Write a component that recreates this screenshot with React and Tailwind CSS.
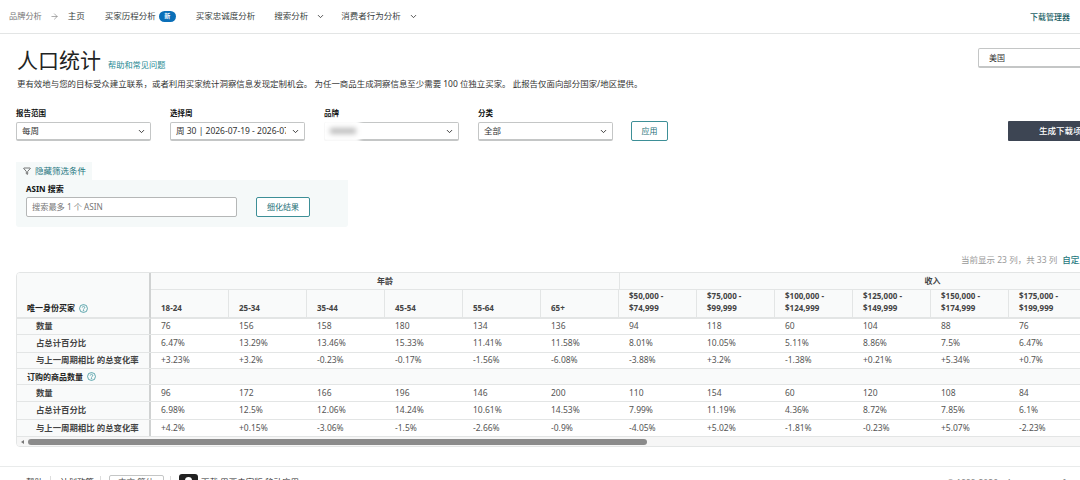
import { ChevronDown, ArrowRight, Filter } from 'lucide-react';

const font = "font-['Noto_Sans','Noto_Sans_CJK_SC',sans-serif]";

const ageCols = ['18-24', '25-34', '35-44', '45-54', '55-64', '65+'];
const incomeCols = [
  ['$50,000 -', '$74,999'],
  ['$75,000 -', '$99,999'],
  ['$100,000 -', '$124,999'],
  ['$125,000 -', '$149,999'],
  ['$150,000 -', '$174,999'],
  ['$175,000 -', '$199,999'],
];

const rows = [
  { label: '数量', h: 'h-[16px]', cells: ['76', '156', '158', '180', '134', '136', '94', '118', '60', '104', '88', '76'] },
  { label: '占总计百分比', h: 'h-[18px]', cells: ['6.47%', '13.29%', '13.46%', '15.33%', '11.41%', '11.58%', '8.01%', '10.05%', '5.11%', '8.86%', '7.5%', '6.47%'] },
  { label: '与上一周期相比 的总变化率', h: 'h-[16px]', cells: ['+3.23%', '+3.2%', '-0.23%', '-0.17%', '-1.56%', '-6.08%', '-3.88%', '+3.2%', '-1.38%', '+0.21%', '+5.34%', '+0.7%'] },
  { section: '订购的商品数量' },
  { label: '数量', h: 'h-[17px]', cells: ['96', '172', '166', '196', '146', '200', '110', '154', '60', '120', '108', '84'] },
  { label: '占总计百分比', h: 'h-[18px]', cells: ['6.98%', '12.5%', '12.06%', '14.24%', '10.61%', '14.53%', '7.99%', '11.19%', '4.36%', '8.72%', '7.85%', '6.1%'] },
  { label: '与上一周期相比 的总变化率', h: 'h-[17px]', cells: ['+4.2%', '+0.15%', '-3.06%', '-1.5%', '-2.66%', '-0.9%', '-4.05%', '+5.02%', '-1.81%', '-0.23%', '+5.07%', '-2.23%'] },
];

const HelpIcon = () => (
  <svg viewBox="0 0 16 16" className="w-[9px] h-[9px] text-[#2a8a94] shrink-0" fill="none" stroke="currentColor" strokeWidth="1.3">
    <circle cx="8" cy="8" r="7" />
    <path d="M5.8 6.2a2.2 2.2 0 1 1 3.4 1.9c-.8.5-1.2.9-1.2 1.7" />
    <circle cx="8" cy="12" r=".5" />
  </svg>
);

const Select = ({ label, value, blurred }) => (
  <div className="relative w-[135px] flex flex-col">
    <div className="h-[13px] text-[7.5px] leading-[13px] font-bold text-[#0f1111]">{label}</div>
    <div className="relative mt-[2px] h-[19px] bg-white border border-[#c4c6c6] border-b-2 rounded-[2px] flex items-center px-[5px] text-[8.5px] text-[#333] overflow-hidden">
      {!blurred && <span className="whitespace-nowrap">{value}</span>}
      <div className="absolute right-0 inset-y-0 w-[18px] bg-white flex items-center justify-center">
        <ChevronDown className="w-[9px] h-[9px] text-[#333]" strokeWidth={2.5} />
      </div>
    </div>
    {/* blurred brand name */}
    {blurred && (
      <div className="absolute left-[-2px] top-[12px] w-[38px] h-[24px] bg-white blur-[2px] flex items-center pl-[8px]">
        <div className="w-[26px] h-[6px] bg-[#bdbdbd] blur-[1.5px]" />
      </div>
    )}
  </div>
);

const NavItem = ({ children, chevron, className }) => (
  <div className={`flex items-center text-[8.5px] text-[#3a3f3f] whitespace-nowrap ${className}`}>
    {children}
    {chevron && <ChevronDown className="w-[9px] h-[9px] ml-[8px] text-[#333]" strokeWidth={2.2} />}
  </div>
);

const HeaderCell = ({ children }) => (
  <div className="w-[78px] shrink-0 h-full border-r border-[#e3e5e5] bg-[#f9fafa] pl-[10px] pb-[3px] flex flex-col justify-end text-[8px] leading-[12px] font-bold text-[#444] whitespace-nowrap">
    {children}
  </div>
);

export default function App() {
  return (
    <div className={`w-[1080px] h-[480px] overflow-hidden bg-white flex flex-col ${font}`}>
      {/* top nav */}
      <div className="h-[34px] shrink-0 border-b border-[#e3e5e5] flex items-center pl-[9px]">
        <span className="text-[8.2px] text-[#777]">品牌分析</span>
        <ArrowRight className="w-[9px] h-[9px] ml-[8px] text-[#777]" strokeWidth={1.6} />
        <NavItem className="ml-[9px]">主页</NavItem>
        <NavItem className="ml-[20px]">
          买家历程分析
          <span className="ml-[3px] w-[17px] h-[11px] rounded-full bg-[#0b6fb8] text-white text-[6px] font-bold flex items-center justify-center">新</span>
        </NavItem>
        <NavItem className="ml-[20px]">买家忠诚度分析</NavItem>
        <NavItem className="ml-[19px]" chevron>搜索分析</NavItem>
        <NavItem className="ml-[16px]" chevron>消费者行为分析</NavItem>
        <span className="ml-auto mr-[10px] text-[8px] font-medium text-[#1d5f66]">下载管理器</span>
      </div>

      {/* title */}
      <div className="relative h-[57px] shrink-0 pl-[17px]">
        <div className="flex items-end h-[41px]">
          <h1 className="text-[21px] leading-[30px] font-normal text-[#1f2424]">人口统计</h1>
          <span className="ml-[7px] mb-[5px] text-[8.2px] leading-[11px] text-[#1f8a94]">帮助和常见问题</span>
        </div>
        <p className="mt-[3px] text-[8.45px] leading-[11px] text-[#333] whitespace-nowrap">
          更有效地与您的目标受众建立联系，或者利用买家统计洞察信息发现定制机会。 为任一商品生成洞察信息至少需要 100 位独立买家。 此报告仅面向部分国家/地区提供。
        </p>
        <div className="absolute left-[978px] top-[14px] w-[120px] h-[20px] bg-white border border-[#c4c6c6] border-b-2 rounded-[2px] flex items-center pl-[10px] text-[8px] text-[#333]">美国</div>
      </div>

      {/* filters */}
      <div className="flex items-start pl-[16px] mt-[16px] shrink-0 h-[33px]">
        <div className="flex gap-[19px]">
          <Select label="报告范围" value="每周" />
          <Select label="选择周" value="周 30 | 2026-07-19 - 2026-07-25" />
          <Select label="品牌" blurred />
          <Select label="分类" value="全部" />
        </div>
        <button className="ml-[18px] mt-[14px] w-[37px] h-[20px] border border-[#3d8f97] rounded-[2px] text-[8px] text-[#1d6f78]">应用</button>
        <button className="absolute left-[1008px] top-[121px] w-[90px] h-[20px] bg-[#3d4553] rounded-[1px] text-white text-[8.5px] font-medium text-left pl-[31px] whitespace-nowrap">生成下载项</button>
      </div>

      {/* asin filter */}
      <div className="ml-[16px] mt-[22px] shrink-0 w-[332px]">
        <div className="w-[76px] h-[18px] bg-[#f5f9f9] flex items-center pl-[7px] text-[8.5px] text-[#1d7780] whitespace-nowrap">
          <Filter className="w-[8px] h-[8px] mr-[4px] text-[#333]" strokeWidth={2} />
          隐藏筛选条件
        </div>
        <div className="h-[47px] bg-[#f5f9f9] rounded-b-[3px] pl-[10px] flex flex-col">
          <div className="text-[8px] leading-[10px] mt-[4px] font-bold text-[#0f1111]">ASIN 搜索</div>
          <div className="flex items-center mt-[3px]">
            <div className="w-[211px] h-[20px] bg-white border border-[#b5b7b7] rounded-[2px] flex items-center pl-[5px] text-[8.2px] text-[#777]">搜索最多 1 个 ASIN</div>
            <button className="ml-[19px] w-[54px] h-[20px] border border-[#3d8f97] rounded-[2px] bg-white text-[8px] text-[#1d6f78]">细化结果</button>
          </div>
        </div>
      </div>

      {/* table caption */}
      <div className="mt-[27px] h-[12px] shrink-0 flex items-center pl-[961px] text-[8.5px] whitespace-nowrap">
        <span className="text-[#999]">当前显示 23 列，共 33 列</span>
        <span className="ml-[5px] text-[#1d7780] font-medium">自定义</span>
      </div>

      {/* table */}
      <div className="ml-[16px] mt-[6px] w-[1080px] h-[175px] shrink-0 border border-[#e3e5e5] rounded-tl-[4px] rounded-bl-[4px] overflow-hidden flex flex-col">
        <div className="flex">
          <div className="w-[134px] shrink-0 border-r-2 border-r-[#d0d2d2] h-[46px] bg-[#f9fafa] flex items-end pl-[10px] pb-[3px] text-[8px] leading-[12px] font-bold text-[#222] border-b-2 border-b-[#e3e5e5]">
            <span>唯一身份买家</span>
            <span className="ml-[4px] mb-[1px]"><HelpIcon /></span>
          </div>
          <div className="flex flex-col">
            <div className="flex h-[17px] border-b border-[#e3e5e5]">
              <div className="w-[469px] shrink-0 bg-[#f9fafa] border-r border-[#e3e5e5] text-[8px] leading-[16px] font-bold text-[#444] text-center">年龄</div>
              <div className="w-[625px] shrink-0 bg-[#f9fafa] text-[8px] leading-[16px] font-bold text-[#444] text-center">收入</div>
            </div>
            <div className="flex h-[29px] border-b-2 border-[#e3e5e5]">
              {ageCols.map((c) => (
                <HeaderCell key={c}>{c}</HeaderCell>
              ))}
              {incomeCols.map((c) => (
                <HeaderCell key={c[0]}>
                  <div>{c[0]}</div>
                  <div>{c[1]}</div>
                </HeaderCell>
              ))}
            </div>
          </div>
        </div>

        {rows.map((row, i) =>
          row.section ? (
            <div key={i} className="flex h-[16px] border-b border-[#e3e5e5]">
              <div className="w-[134px] shrink-0 border-r-2 border-r-[#d0d2d2] bg-[#f9fafa] pl-[10px] flex items-center text-[8px] font-bold text-[#222]">
                <span>{row.section}</span>
                <span className="ml-[4px]"><HelpIcon /></span>
              </div>
              <div className="flex-1 bg-[#f9fafa]" />
            </div>
          ) : (
            <div key={i} className={`flex border-b border-[#e3e5e5] ${row.h}`}>
              <div className="w-[134px] shrink-0 border-r-2 border-r-[#d0d2d2] bg-[#f9fafa] pl-[19px] flex items-center text-[8.4px] font-bold text-[#444] whitespace-nowrap">{row.label}</div>
              <div className="flex">
                {row.cells.map((c, j) => (
                  <div key={j} className="w-[78px] shrink-0 pl-[10px] flex items-center text-[8.5px] text-[#555]">{c}</div>
                ))}
              </div>
            </div>
          )
        )}

        {/* scrollbar */}
        <div className="h-[9px] flex items-center bg-[#f6f6f6] pl-[4px]">
          <div className="w-0 h-0 border-y-[2px] border-y-transparent border-r-[3px] border-r-[#777]" />
          <div className="ml-[4px] w-[619px] h-[6px] rounded-full bg-[#8b8b8b]" />
        </div>
      </div>

      {/* footer */}
      <div className="mt-[19px] relative border-t border-[#e9ebeb] h-[20px] shrink-0 pl-[26px] flex items-start text-[8.5px] leading-[11px] text-[#333] whitespace-nowrap">
        <span className="mt-[9px]">帮助</span>
        <div className="ml-[7px] mt-[9px] w-px h-[10px] bg-[#ddd]" />
        <span className="ml-[9px] mt-[9px]">计划政策</span>
        <div className="ml-[6px] mt-[9px] w-px h-[10px] bg-[#ddd]" />
        <div className="ml-[8px] mt-[8px] w-[55px] h-[14px] border border-[#c4c6c6] rounded-[2px] pl-[8px] leading-[12px] text-[#555]">中文 简体</div>
        <div className="ml-[6px] mt-[9px] w-px h-[10px] bg-[#ddd]" />
        <div className="ml-[8px] mt-[7px] w-[19px] h-[18px] rounded-[3px] bg-[#222] flex justify-center pt-[3px]">
          <div className="w-[7px] h-[7px] rounded-full bg-white" />
        </div>
        <span className="ml-[3px] mt-[9px]">下载 巴西卖家版 移动应用</span>
        <span className="absolute left-[947px] top-[10px] text-[#888]">© 1999-2026，Amazon.com, Inc. 或其关联公司</span>
      </div>
    </div>
  );
}
